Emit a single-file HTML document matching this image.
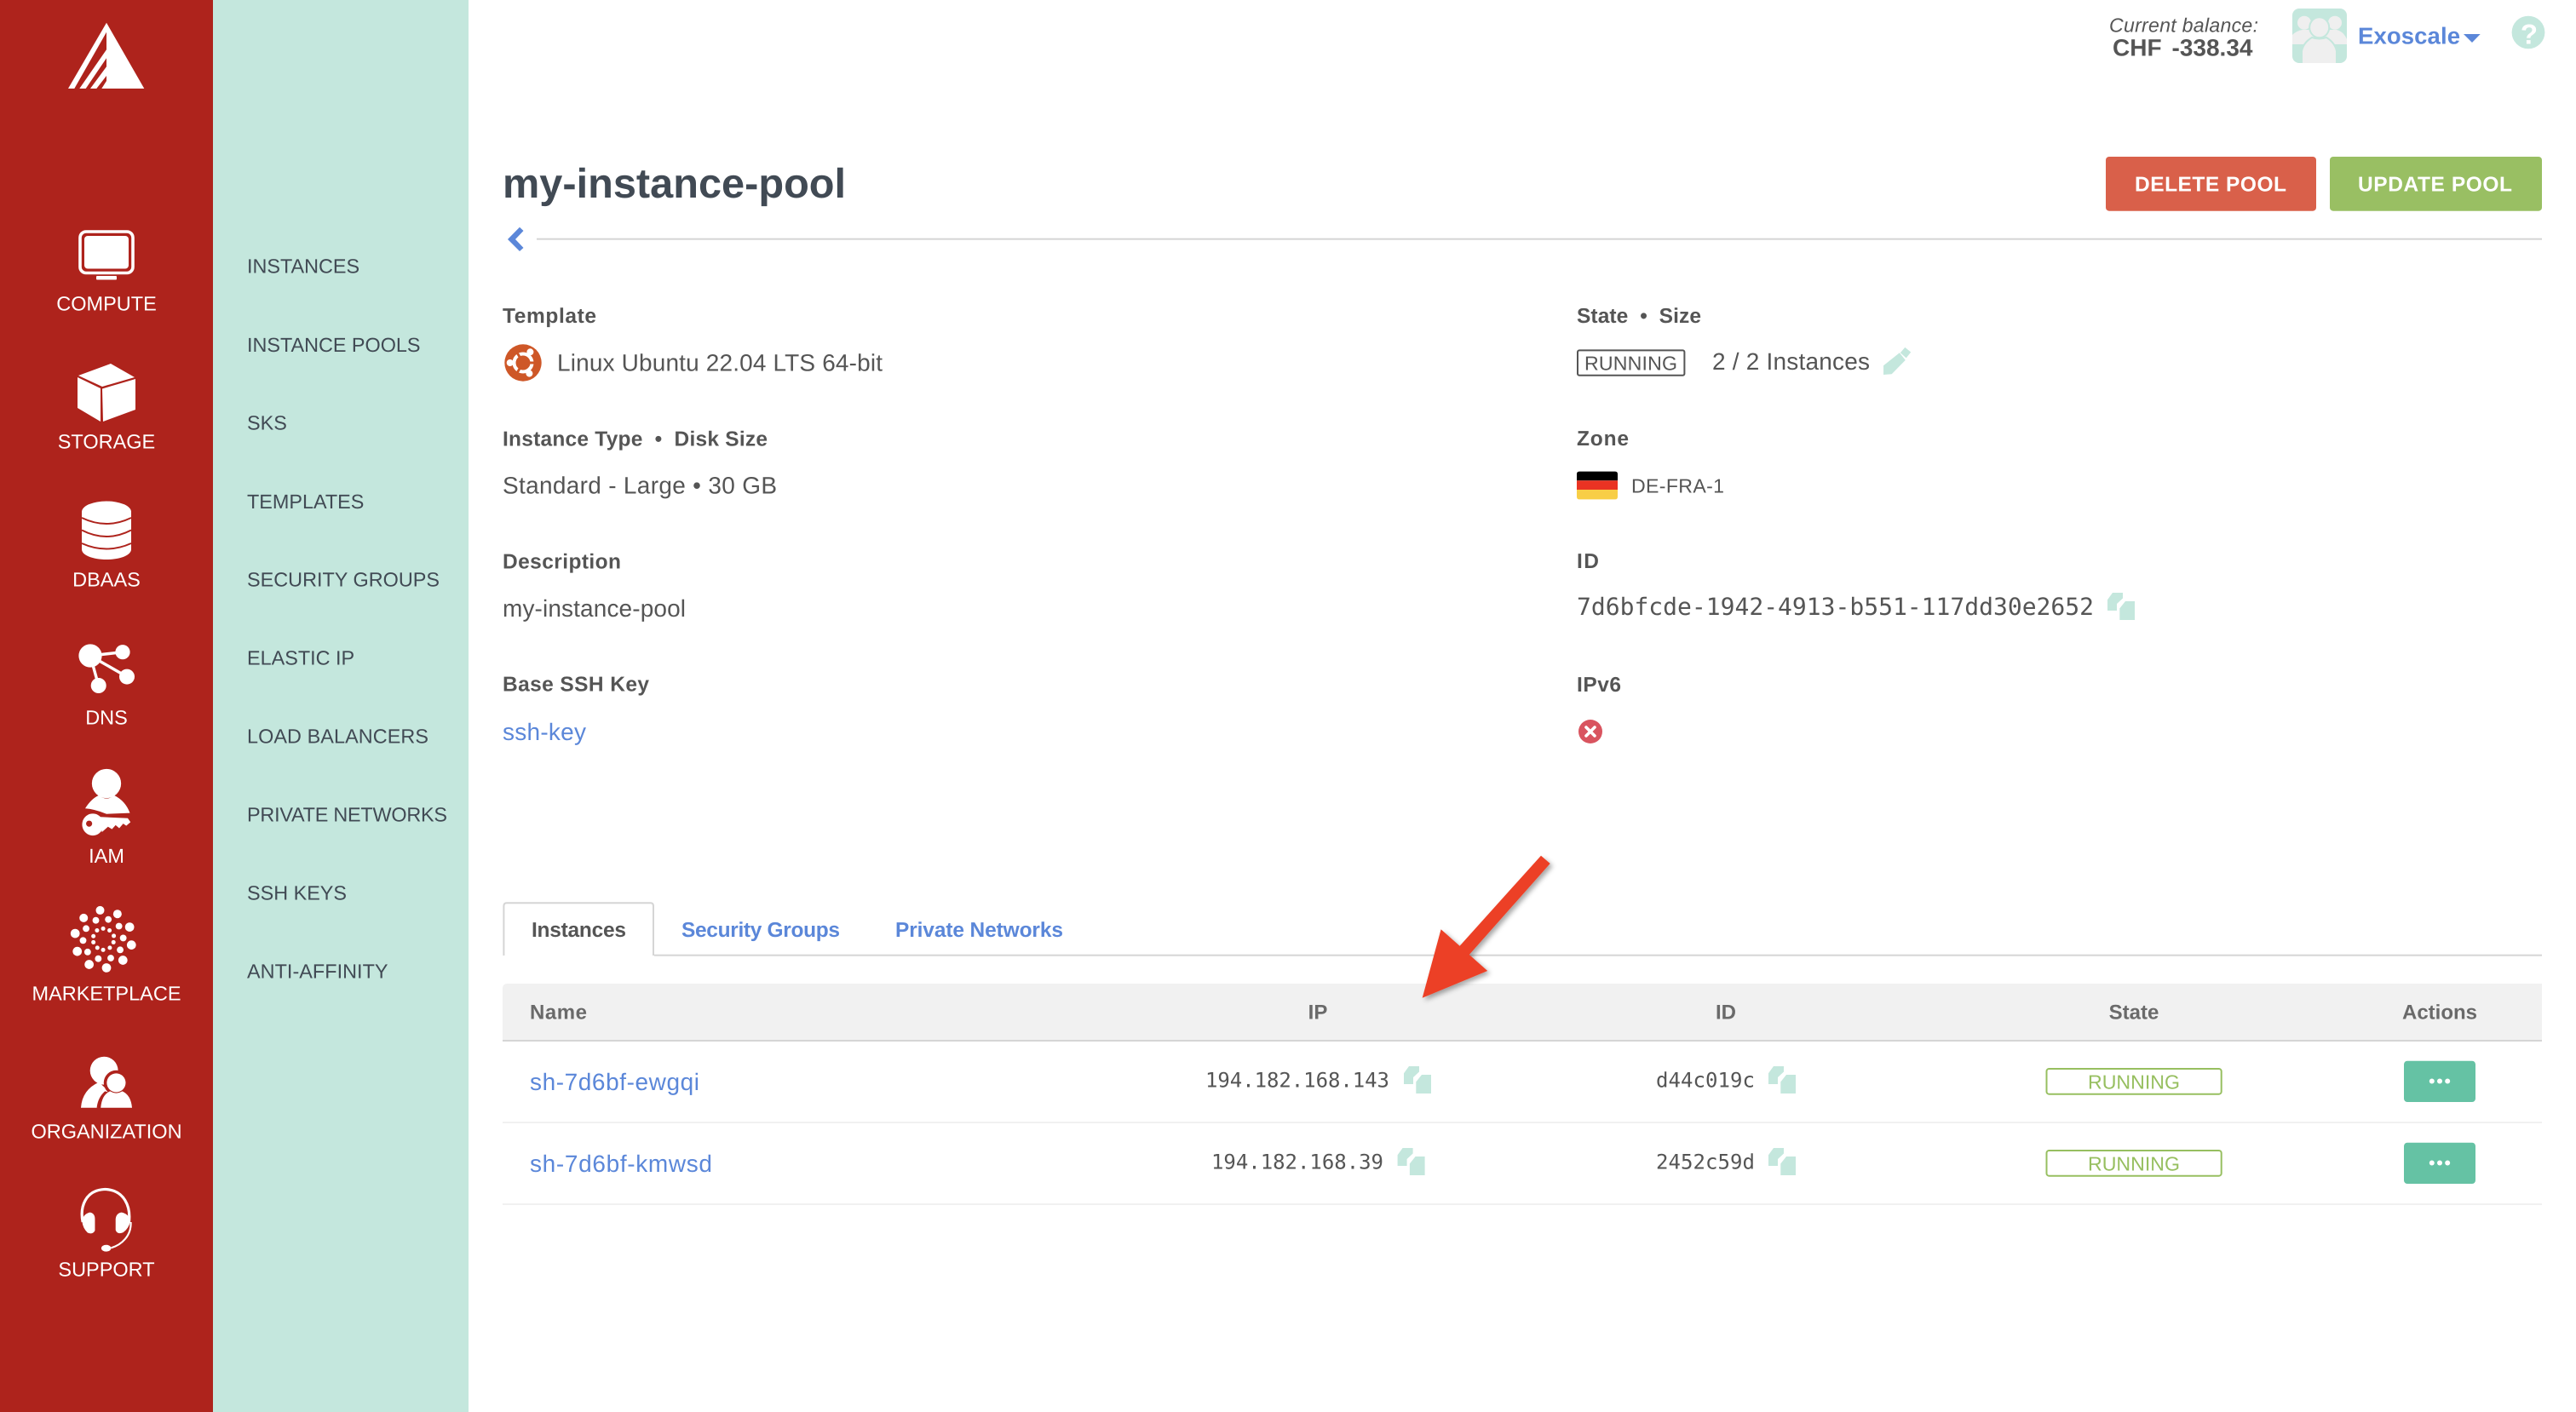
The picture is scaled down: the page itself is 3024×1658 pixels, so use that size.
<!DOCTYPE html>
<html lang="en">
<head>
<meta charset="utf-8">
<title>my-instance-pool</title>
<style>
html,body{margin:0;padding:0;background:#fff;width:3024px;height:1658px;overflow:hidden}
svg{display:block;font-family:"Liberation Sans",Arial,sans-serif;text-rendering:geometricPrecision}
.side{fill:#fff;font-size:23.5px;text-anchor:middle}
.sub{fill:#414a54;font-size:23.4px}
.lbl{fill:#555;font-size:24.5px;font-weight:700}
.val{fill:#555;font-size:28px}
.lnk{fill:#5b87d9;font-size:28px}
.mono{fill:#555;font-family:"DejaVu Sans Mono","Liberation Mono",monospace;font-size:24px}
.th{fill:#6a6a6a;font-size:24px;font-weight:700}
.thc{fill:#6a6a6a;font-size:24px;font-weight:700;text-anchor:middle}
.tab{fill:#5b87d9;font-size:24.5px;font-weight:700}
.grn{fill:#97bf60;font-size:23.14px;text-anchor:middle}
</style>
</head>
<body>
<svg xmlns="http://www.w3.org/2000/svg" width="3024" height="1658" viewBox="0 0 3024 1658">
<defs>
<g id="copy" fill="#c4e7dd">
<path d="M0 8.2L6 0H18V6.5L11 13V21H0Z"/>
<path d="M14.3 18.4L21 10H32V32H14.3Z"/>
</g>
<clipPath id="av"><rect x="2691" y="10" width="64" height="64" rx="8"/></clipPath>
<filter id="arrowshadow" x="-20%" y="-20%" width="140%" height="140%"><feDropShadow dx="3" dy="3" stdDeviation="3" flood-color="#000" flood-opacity=".35"/></filter>
</defs>

<!-- Sidebars -->
<rect x="0" y="0" width="250" height="1658" fill="#ae231c"/>
<rect x="250" y="0" width="300" height="1658" fill="#c4e7dd"/>

<!-- Logo -->
<g fill="#fff">
<path d="M80 104L125 26.7V37.7L87.3 104Z"/>
<path d="M93.3 104L125 58.3V68.3L100.7 104Z"/>
<path d="M106 104L125 78.3V89L113.3 104Z"/>
<path d="M119.3 104L125 95V26.7L169.3 104Z"/>
</g>

<!-- Compute -->
<rect x="94" y="272" width="62" height="48.5" rx="7" fill="none" stroke="#fff" stroke-width="3.6"/>
<rect x="99" y="277" width="52" height="38.5" rx="4" fill="#fff"/>
<rect x="113" y="324" width="24" height="4.5" rx="1" fill="#fff"/>
<text class="side" x="125" y="364.3">COMPUTE</text>

<!-- Storage -->
<g fill="#fff">
<path d="M130 427L158 443L120 454L92 441Z"/>
<path d="M91 443L118 456V495L91 479Z"/>
<path d="M120 456.5L159 445V481L121 495Z"/>
</g>
<text class="side" x="125" y="526.4">STORAGE</text>

<!-- DBaaS -->
<ellipse cx="125" cy="601" rx="29" ry="12.5" fill="#fff"/>
<path d="M96 601H154V645C154 652 141 657 125 657C109 657 96 652 96 645Z" fill="#fff"/>
<g fill="none" stroke="#ae231c" stroke-width="2">
<path d="M96 608Q125 622 154 608"/>
<path d="M96 622.5Q125 637.5 154 622.5"/>
<path d="M96 638Q125 651 154 638"/>
</g>
<text class="side" x="125" y="688.6">DBAAS</text>

<!-- DNS -->
<g fill="#fff" stroke="#fff" stroke-width="3.4">
<line x1="106" y1="770" x2="144" y2="765.7"/>
<line x1="106" y1="770" x2="149" y2="794.6"/>
<line x1="106" y1="770" x2="115.7" y2="805"/>
</g>
<g fill="#fff">
<circle cx="106" cy="770" r="13.6"/>
<circle cx="144" cy="765.7" r="8.6"/>
<circle cx="149" cy="794.6" r="9"/>
<circle cx="115.7" cy="805" r="9"/>
</g>
<text class="side" x="125" y="850.7">DNS</text>

<!-- IAM -->
<g transform="translate(0,560) scale(.35714)" fill="#fff">
<circle cx="350" cy="1008" r="48"/>
<path d="M280 1090Q300 1058 325 1047Q350 1068 375 1047Q412 1065 427 1105L350 1108Q310 1092 280 1090Z"/>
<path d="M330 1118L420 1122L429 1135L415 1147L405 1140L392 1155L380 1145L368 1158L355 1150L335 1168Z"/>
<path fill-rule="evenodd" d="M305 1107a35 36 0 1 0 .1 0ZM293 1130a10 10 0 1 1-.1 0Z"/>
</g>
<text class="side" x="125" y="1012.9">IAM</text>

<!-- Marketplace -->
<g transform="translate(0,1060) scale(.35714)" fill="#fff">
<circle cx="329" cy="25" r="14"/><circle cx="386" cy="37" r="14"/><circle cx="426" cy="80" r="15"/><circle cx="432" cy="139" r="15"/><circle cx="404" cy="189" r="15"/><circle cx="350" cy="214" r="15"/><circle cx="293" cy="203" r="15"/><circle cx="254" cy="160" r="15"/><circle cx="247" cy="101" r="15"/><circle cx="275" cy="50" r="14"/>
<circle cx="356" cy="55" r="11"/><circle cx="391" cy="77" r="11"/><circle cx="405" cy="116" r="11"/><circle cx="395" cy="155" r="11"/><circle cx="364" cy="182" r="11"/><circle cx="323" cy="184" r="11"/><circle cx="288" cy="162" r="11"/><circle cx="273" cy="124" r="11"/><circle cx="283" cy="85" r="11"/><circle cx="315" cy="58" r="11"/>
<circle cx="339" cy="85" r="7"/><circle cx="360" cy="91" r="7"/><circle cx="374" cy="109" r="7"/><circle cx="373" cy="130" r="7"/><circle cx="361" cy="148" r="7"/><circle cx="339" cy="155" r="7"/><circle cx="320" cy="148" r="7"/><circle cx="307" cy="130" r="7"/><circle cx="307" cy="110" r="7"/><circle cx="319" cy="91" r="7"/>
</g>
<text class="side" x="125" y="1174.3">MARKETPLACE</text>

<!-- Organization -->
<g transform="translate(0,1060) scale(.35714)">
<circle cx="342" cy="552" r="46" fill="#fff"/>
<path d="M266 674Q270 615 325 590L380 640L340 630Q322 650 320 674Z" fill="#fff"/>
<circle cx="382" cy="592" r="41" fill="#ae231c"/>
<path d="M318 674Q322 640 345 620L420 640V674Z" fill="#ae231c"/>
<circle cx="382" cy="592" r="31" fill="#fff"/>
<path d="M331 674Q335 630 362 620Q382 632 402 620Q430 632 434 674Z" fill="#fff"/>
</g>
<text class="side" x="125" y="1336.4">ORGANIZATION</text>

<!-- Support -->
<g transform="translate(0,1060) scale(.35714)">
<path d="M272 1050C262 1000 280 945 345 942C410 945 430 1000 424 1050" fill="none" stroke="#fff" stroke-width="9"/>
<path d="M295 1018Q312 1020 312 1040V1078Q305 1092 288 1085Q272 1070 270 1048Q272 1024 295 1018Z" fill="#fff"/>
<path d="M400 1018Q382 1020 380 1040V1076Q385 1092 405 1084Q424 1070 428 1048Q426 1024 400 1018Z" fill="#fff"/>
<path d="M430 1050C432 1095 400 1125 365 1135" fill="none" stroke="#fff" stroke-width="6"/>
<ellipse cx="349" cy="1136" rx="16" ry="11" fill="#fff"/>
</g>
<text class="side" x="125" y="1498.6">SUPPORT</text>

<!-- Submenu -->
<text class="sub" x="290" y="320.7">INSTANCES</text>
<text class="sub" x="290" y="412.9" textLength="203.5">INSTANCE POOLS</text>
<text class="sub" x="290" y="504.6">SKS</text>
<text class="sub" x="290" y="596.8">TEMPLATES</text>
<text class="sub" x="290" y="688.6" textLength="226">SECURITY GROUPS</text>
<text class="sub" x="290" y="780.7">ELASTIC IP</text>
<text class="sub" x="290" y="872.5" textLength="213">LOAD BALANCERS</text>
<text class="sub" x="290" y="964.3" textLength="235">PRIVATE NETWORKS</text>
<text class="sub" x="290" y="1056.4">SSH KEYS</text>
<text class="sub" x="290" y="1148.6" textLength="165.5">ANTI-AFFINITY</text>

<!-- Top right -->
<text x="2476" y="37.7" font-size="23.14" font-style="italic" fill="#555" textLength="175">Current balance:</text>
<text y="65.7" font-size="28" font-weight="700" fill="#555"><tspan x="2480">CHF</tspan><tspan x="2549.5">-338.34</tspan></text>
<g clip-path="url(#av)">
<rect x="2691" y="10" width="64" height="64" fill="#c4e7dd"/>
<circle cx="2705" cy="26.7" r="8" fill="#efefef"/>
<circle cx="2741" cy="26.7" r="8" fill="#efefef"/>
<path d="M2691 52V41Q2696 36 2703 35H2743Q2751 37 2755 46V52Z" fill="#efefef"/>
<ellipse cx="2722.7" cy="32.3" rx="11.5" ry="12" fill="#efefef" stroke="#c4e7dd" stroke-width="2"/>
<path d="M2702 76V60Q2704 50 2714 44Q2722.7 47 2731 44Q2741 50 2743 60V76Z" fill="#efefef" stroke="#c4e7dd" stroke-width="2"/>
</g>
<text x="2768" y="51.7" font-size="27.5" font-weight="700" fill="#5b87d9" textLength="120">Exoscale</text>
<path d="M2892 40H2911.7L2902 50Z" fill="#5b87d9"/>
<ellipse cx="2968" cy="38" rx="19.4" ry="19.3" fill="#c4e7dd"/>
<text x="2969" y="51.7" font-size="33" font-weight="700" fill="#fff" text-anchor="middle">?</text>

<!-- Title -->
<text x="590" y="232" font-size="48.7" font-weight="700" fill="#414a54">my-instance-pool</text>
<rect x="2472" y="184" width="247" height="63.7" rx="4" fill="#d9604a"/>
<rect x="2735" y="184" width="249" height="63.7" rx="4" fill="#99bf63"/>
<text x="2506" y="224.7" font-size="24.5" font-weight="700" fill="#fff" textLength="178">DELETE POOL</text>
<text x="2768" y="224.7" font-size="24.5" font-weight="700" fill="#fff" textLength="181">UPDATE POOL</text>
<path d="M596 281L610 266.7L614.5 271L605 281L614.5 291L610 295Z" fill="#5b87d9"/>
<rect x="630" y="279.7" width="2354" height="2" fill="#d5d5d5"/>

<!-- Details left -->
<text class="lbl" x="590" y="379" textLength="110">Template</text>
<circle cx="614" cy="426" r="21.7" fill="#ce5727"/>
<circle cx="614" cy="426" r="10.5" fill="none" stroke="#fff" stroke-width="4"/>
<g stroke="#ce5727" stroke-width="3">
<line x1="621" y1="426" x2="628" y2="426"/>
<line x1="610.5" y1="420" x2="607" y2="414"/>
<line x1="610.5" y1="432" x2="607" y2="438"/>
</g>
<g fill="#fff"><circle cx="622.4" cy="413.3" r="4"/><circle cx="598.7" cy="426" r="4"/><circle cx="621.4" cy="438.6" r="4"/></g>
<text class="val" x="654" y="435.7" textLength="382">Linux Ubuntu 22.04 LTS 64-bit</text>

<text class="lbl" x="590" y="523.3" textLength="311">Instance Type&#160; •&#160; Disk Size</text>
<text class="val" x="590" y="579.3" textLength="322">Standard - Large • 30 GB</text>

<text class="lbl" x="590" y="667.3" textLength="139">Description</text>
<text class="val" x="590" y="724" textLength="215">my-instance-pool</text>

<text class="lbl" x="590" y="811.7" textLength="172">Base SSH Key</text>
<text class="lnk" x="590" y="869" textLength="98">ssh-key</text>

<!-- Details right -->
<text class="lbl" x="1851" y="379" textLength="146">State&#160; •&#160; Size</text>
<rect x="1852" y="411.4" width="125.4" height="29.4" rx="2" fill="none" stroke="#555" stroke-width="2"/>
<text x="1860" y="434.6" font-size="23.14" fill="#555" textLength="109">RUNNING</text>
<text class="val" x="2010" y="434" textLength="185">2 / 2 Instances</text>
<g transform="translate(1820,340) scale(.459,.357)" fill="#c4e7dd">
<path d="M852 250L893 208L908 232L873 278L852 280Z"/>
<path d="M907 190L922 206L910 225L895 208Z"/>
</g>

<text class="lbl" x="1851" y="523" textLength="61">Zone</text>
<g>
<path d="M1854 553.6H1896Q1899 553.6 1899 556.6V564.3H1851V556.6Q1851 553.6 1854 553.6Z" fill="#000"/>
<rect x="1851" y="564.3" width="48" height="10.7" fill="#ea3323"/>
<path d="M1851 575H1899V583.4Q1899 586.4 1896 586.4H1854Q1851 586.4 1851 583.4Z" fill="#f8ce46"/>
</g>
<text x="1915" y="578.6" font-size="23.14" fill="#555" textLength="109">DE-FRA-1</text>

<text class="lbl" x="1851" y="666.8" textLength="26">ID</text>
<text class="mono" x="1851" y="722" style="font-size:28px" textLength="607">7d6bfcde-1942-4913-b551-117dd30e2652</text>
<use href="#copy" x="2474" y="696"/>

<text class="lbl" x="1851" y="812" textLength="52">IPv6</text>
<circle cx="1867" cy="859" r="14" fill="#d9545f"/>
<path d="M1862 854L1872 864M1872 854L1862 864" stroke="#fff" stroke-width="3.6" stroke-linecap="round"/>

<!-- Tabs -->
<rect x="768" y="1120.7" width="2216" height="2" fill="#d5d5d5"/>
<path d="M591.4 1122V1064Q591.4 1060.3 595 1060.3H763.5Q767 1060.3 767 1064V1122" fill="none" stroke="#d5d5d5" stroke-width="2"/>
<text x="624" y="1100" font-size="24.5" font-weight="700" fill="#555" textLength="111">Instances</text>
<text class="tab" x="800" y="1100" textLength="186">Security Groups</text>
<text class="tab" x="1051" y="1100" textLength="197">Private Networks</text>

<!-- Table header -->
<path d="M596 1155H2984V1221H590V1161Q590 1155 596 1155Z" fill="#f1f1f1"/>
<rect x="590" y="1221" width="2394" height="2" fill="#d5d5d5"/>
<text class="th" x="622" y="1196.7" textLength="67">Name</text>
<text class="thc" x="1547" y="1196.7">IP</text>
<text class="thc" x="2026" y="1196.7">ID</text>
<text class="thc" x="2505" y="1196.7">State</text>
<text class="thc" x="2864" y="1196.7">Actions</text>

<!-- Rows -->
<rect x="590" y="1317" width="2394" height="2" fill="#f1f1f1"/>
<rect x="590" y="1413" width="2394" height="2" fill="#f1f1f1"/>

<text class="lnk" x="622" y="1280" textLength="199">sh-7d6bf-ewgqi</text>
<text class="lnk" x="622" y="1376" textLength="214">sh-7d6bf-kmwsd</text>

<text class="mono" x="1415" y="1276.7" textLength="216">194.182.168.143</text>
<use href="#copy" x="1648" y="1252"/>
<text class="mono" x="1422" y="1372.7" textLength="202">194.182.168.39</text>
<use href="#copy" x="1640.6" y="1348"/>

<text class="mono" x="1944" y="1276.7" textLength="116">d44c019c</text>
<use href="#copy" x="2076" y="1252"/>
<text class="mono" x="1944" y="1372.7" textLength="116">2452c59d</text>
<use href="#copy" x="2076" y="1348"/>

<rect x="2402.5" y="1255" width="205.2" height="29.7" rx="3" fill="none" stroke="#97bf60" stroke-width="2"/>
<text class="grn" x="2505" y="1278.3">RUNNING</text>
<rect x="2402.5" y="1351" width="205.2" height="29.7" rx="3" fill="none" stroke="#97bf60" stroke-width="2"/>
<text class="grn" x="2505" y="1374.3">RUNNING</text>

<rect x="2822" y="1245.7" width="84" height="48.3" rx="4" fill="#65c2a4"/>
<g fill="#fff"><circle cx="2854.8" cy="1269.5" r="3"/><circle cx="2864" cy="1269.5" r="3"/><circle cx="2873.2" cy="1269.5" r="3"/></g>
<rect x="2822" y="1341.7" width="84" height="48.3" rx="4" fill="#65c2a4"/>
<g fill="#fff"><circle cx="2854.8" cy="1365.5" r="3"/><circle cx="2864" cy="1365.5" r="3"/><circle cx="2873.2" cy="1365.5" r="3"/></g>

<!-- Annotation arrow -->
<path d="M1809 1004.7L1819.7 1014L1724.8 1121L1746.2 1140L1669.7 1171.7L1691.6 1091.3L1713.6 1110.7Z" fill="#ec4125" filter="url(#arrowshadow)"/>
</svg>
</body>
</html>
